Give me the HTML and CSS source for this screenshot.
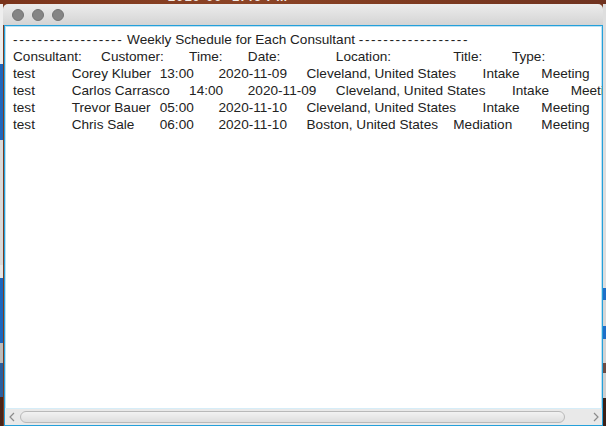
FILE: index.html
```html
<!DOCTYPE html>
<html>
<head>
<meta charset="utf-8">
<title>Weekly Schedule</title>
<link rel="stylesheet" href="styles.css">
</head>
<body>
<div class="desktop">
  <div class="topbar"><span class="clock">2019-09  1:46 PM</span></div>
  <div class="main">
    <div class="strip">
      <div class="seg l1"></div><div class="seg l2"></div><div class="seg l3"></div><div class="seg l4"></div>
      <div class="seg l5"></div><div class="seg l6"></div><div class="seg l7"></div><div class="seg l8"></div>
    </div>
    <div class="window">
      <div class="titlebar">
        <span class="light"></span><span class="light"></span><span class="light"></span>
      </div>
      <div class="textarea">
<pre class="content"><span class="rule">------------------</span> Weekly Schedule for Each Consultant <span class="rule">------------------</span>
Consultant:&#9;Customer:&#9;Time:&#9;Date:&#9;&#9;Location:&#9;&#9;&#9;Title:&#9;Type:
test&#9;&#9;Corey Kluber&#9;13:00&#9;2020-11-09&#9;Cleveland, United States&#9;Intake&#9;Meeting
test&#9;&#9;Carlos Carrasco&#9;14:00&#9;2020-11-09&#9;Cleveland, United States&#9;Intake&#9;Meeting
test&#9;&#9;Trevor Bauer&#9;05:00&#9;2020-11-10&#9;Cleveland, United States&#9;Intake&#9;Meeting
test&#9;&#9;Chris Sale&#9;06:00&#9;2020-11-10&#9;Boston, United States&#9;Mediation&#9;Meeting</pre>
        <div class="hscroll">
          <span class="arrow"><svg width="6" height="10" viewBox="0 0 6 10"><polyline points="5,1 1,5 5,9" fill="none" stroke="#8c8c8c" stroke-width="1.2"/></svg></span>
          <div class="track"><div class="thumb"></div></div>
          <span class="arrow"><svg width="6" height="10" viewBox="0 0 6 10"><polyline points="1,1 5,5 1,9" fill="none" stroke="#8c8c8c" stroke-width="1.2"/></svg></span>
        </div>
      </div>
    </div>
    <div class="strip">
      <div class="seg r1"></div><div class="seg r2"></div><div class="seg r3"></div><div class="seg r4"></div>
      <div class="seg r5"></div><div class="seg r6"></div><div class="seg r7"></div><div class="seg r8"></div>
    </div>
  </div>
</div>
</body>
</html>
```
FILE: styles.css
```css
* { box-sizing: border-box; }
html, body {
  margin: 0;
  width: 606px;
  height: 426px;
  overflow: hidden;
}
body {
  font-family: "Liberation Sans", Arial, sans-serif;
  background: #7b3a20;
}
.desktop {
  display: flex;
  flex-direction: column;
  height: 426px;
}
.topbar {
  height: 4px;
  overflow: hidden;
  background: linear-gradient(90deg, #7a341b, #8c4426 40%, #7d3a20 70%, #6f3320);
}
.clock {
  display: block;
  margin: -10px 0 0 168px;
  color: #f1e9e4;
  font-size: 13px;
  font-weight: bold;
  letter-spacing: 1px;
  line-height: 14px;
  white-space: pre;
}
.main {
  display: flex;
  height: 422px;
}
.strip {
  width: 3px;
  display: flex;
  flex-direction: column;
}
.seg { flex: none; }
.l1 { height: 60px; background: #eeeeee; }
.l2 { height: 76px; background: #2066bb; }
.l3 { height: 125px; background: #dadada; }
.l4 { height: 13px; background: #e6e6e6; }
.l5 { height: 65px; background: #1c66bd; }
.l6 { height: 20px; background: #bcbcbc; }
.l7 { height: 34px; background: #2a5f9e; }
.l8 { height: 29px; background: #4a2418; }
.r1 { height: 284px; background: #dedede; }
.r2 { height: 12px; background: #1f6fc8; }
.r3 { height: 26px; background: #d6d6d6; }
.r4 { height: 13px; background: #1f6fc8; }
.r5 { height: 24px; background: #d3d3d3; }
.r6 { height: 10px; background: #6d4c44; }
.r7 { height: 25px; background: #cfcfcf; }
.r8 { height: 28px; background: #3b1f16; }

.window {
  width: 600px;
  display: flex;
  flex-direction: column;
}
.titlebar {
  height: 21px;
  flex: none;
  background: linear-gradient(#ececec, #d4d4d4);
  border-radius: 5px 5px 0 0;
  display: flex;
  align-items: center;
  gap: 8px;
  padding-left: 9px;
}
.light {
  width: 12px;
  height: 12px;
  border-radius: 50%;
  background: #858585;
  border: 1px solid #747474;
}
.textarea {
  flex: 1;
  min-height: 0;
  margin-left: 1px;
  border: 1px solid #25a0da;
  box-shadow: inset 0 0 0 1px #bde2f3;
  background: #ffffff;
  display: flex;
  flex-direction: column;
}
.content {
  flex: 1;
  min-height: 0;
  margin: 0;
  padding: 5px 0 0 8px;
  font: 13.6px/17px "Liberation Sans", Arial, sans-serif;
  color: #222222;
  tab-size: 29.35px;
  white-space: pre;
  overflow: hidden;
}
.rule { letter-spacing: 1.6px; }
.hscroll {
  height: 17px;
  flex: none;
  display: flex;
  align-items: center;
  background: #e9e9e9;
  border-top: 1px solid #d6edf8;
}
.arrow {
  width: 13px;
  display: flex;
  justify-content: center;
  align-items: center;
}
.track {
  flex: 1;
  display: flex;
  align-items: center;
}
.thumb {
  width: 545px;
  height: 12px;
  margin-left: 2px;
  border: 1px solid #b9b9b9;
  border-radius: 6px;
  background: linear-gradient(#f2f2f2, #dedede);
}
```
